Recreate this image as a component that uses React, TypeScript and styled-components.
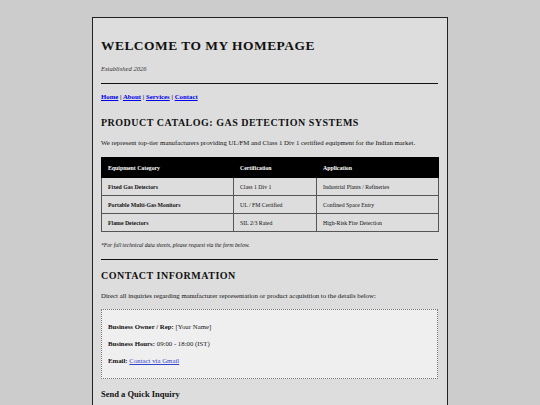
import styled, { createGlobalStyle } from "styled-components";

const GlobalStyle = createGlobalStyle`
  html, body {
    margin: 0;
    padding: 0;
    background: #cccccc;
    font-family: "Liberation Serif", "Times New Roman", serif;
    color: #111;
  }
`;

const Page = styled.div`
  width: 356px;
  margin: 17px auto 0;
  box-sizing: border-box;
  border: 1px solid #222;
  background: #dddddd;
  padding: 20px 9px 20px 8px;
`;

const Title = styled.h1`
  margin: 0;
  font-size: 13.45px;
  line-height: 15px;
  letter-spacing: 0.5px;
  font-weight: bold;
`;

const Tagline = styled.p`
  margin: 12px 0 0;
  font-size: 6.6px;
  line-height: 8px;
  font-style: italic;
  color: #333;
`;

const Rule = styled.hr<{ $top: number }>`
  margin: ${(p) => p.$top}px 0 0;
  border: none;
  border-top: 1px solid #111;
  height: 0;
`;

const Nav = styled.nav`
  margin-top: 9px;
  font-size: 6.8px;
  line-height: 8px;
  font-weight: bold;
`;

const NavLink = styled.a`
  color: #0000ee;
  text-decoration: underline;
`;

const Heading = styled.h2<{ $top: number }>`
  margin: ${(p) => p.$top}px 0 0;
  font-size: 10px;
  line-height: 12px;
  letter-spacing: 0.5px;
  font-weight: bold;
`;

const Text = styled.p`
  margin: 10px 0 0;
  font-size: 6.8px;
  line-height: 8px;
`;

const Table = styled.table`
  margin-top: 10px;
  width: 337px;
  border-collapse: collapse;
  table-layout: fixed;
  font-size: 5.8px;
`;

const Th = styled.th<{ $w: number }>`
  width: ${(p) => p.$w}px;
  background: #000;
  color: #fff;
  text-align: left;
  font-weight: bold;
  height: 20px;
  padding: 0 6px;
  box-sizing: border-box;
  border: 1px solid #000;
`;

const Td = styled.td<{ $bold?: boolean }>`
  height: 18px;
  padding: 0 6px;
  box-sizing: border-box;
  border: 1px solid #555;
  font-weight: ${(p) => (p.$bold ? "bold" : "normal")};
`;

const Note = styled.p`
  margin: 9.5px 0 0;
  font-size: 5.65px;
  line-height: 7px;
  font-style: italic;
`;

const InfoBox = styled.div`
  margin-top: 9px;
  border: 1px dotted #777;
  background: #efefef;
  padding: 13px 6px;
  display: flex;
  flex-direction: column;
  gap: 9px;
`;

const InfoLine = styled.div`
  font-size: 6.8px;
  line-height: 8px;
  color: #222;

  b {
    color: #111;
  }
`;

const MailLink = styled.a`
  color: #3344cc;
  text-decoration: underline;
`;

const SubHeading = styled.h3`
  margin: 10px 0 0;
  font-size: 8.5px;
  line-height: 10px;
  font-weight: bold;
`;

const rows = [
  ["Fixed Gas Detectors", "Class 1 Div 1", "Industrial Plants / Refineries"],
  ["Portable Multi-Gas Monitors", "UL / FM Certified", "Confined Space Entry"],
  ["Flame Detectors", "SIL 2/3 Rated", "High-Risk Fire Detection"],
];

const App = () => {
  return (
    <>
      <GlobalStyle />
      <Page>
        <Title>WELCOME TO MY HOMEPAGE</Title>
        <Tagline>Established 2026</Tagline>
        <Rule $top={10} />
        <Nav>
          <NavLink href="#">Home</NavLink> | <NavLink href="#">About</NavLink> |{" "}
          <NavLink href="#">Services</NavLink> | <NavLink href="#">Contact</NavLink>
        </Nav>

        <Heading $top={16}>PRODUCT CATALOG: GAS DETECTION SYSTEMS</Heading>
        <Text>
          We represent top-tier manufacturers providing UL/FM and Class 1 Div 1 certified
          equipment for the Indian market.
        </Text>
        <Table>
          <thead>
            <tr>
              <Th $w={132}>Equipment Category</Th>
              <Th $w={83}>Certification</Th>
              <Th $w={122}>Application</Th>
            </tr>
          </thead>
          <tbody>
            {rows.map((r) => (
              <tr key={r[0]}>
                <Td $bold>{r[0]}</Td>
                <Td>{r[1]}</Td>
                <Td>{r[2]}</Td>
              </tr>
            ))}
          </tbody>
        </Table>
        <Note>*For full technical data sheets, please request via the form below.</Note>
        <Rule $top={10.5} />

        <Heading $top={10}>CONTACT INFORMATION</Heading>
        <Text>
          Direct all inquiries regarding manufacturer representation or product acquisition to
          the details below:
        </Text>
        <InfoBox>
          <InfoLine>
            <b>Business Owner / Rep:</b> [Your Name]
          </InfoLine>
          <InfoLine>
            <b>Business Hours:</b> 09:00 - 18:00 (IST)
          </InfoLine>
          <InfoLine>
            <b>Email:</b> <MailLink href="#">Contact via Gmail</MailLink>
          </InfoLine>
        </InfoBox>
        <SubHeading>Send a Quick Inquiry</SubHeading>
      </Page>
    </>
  );
};

export default App;
